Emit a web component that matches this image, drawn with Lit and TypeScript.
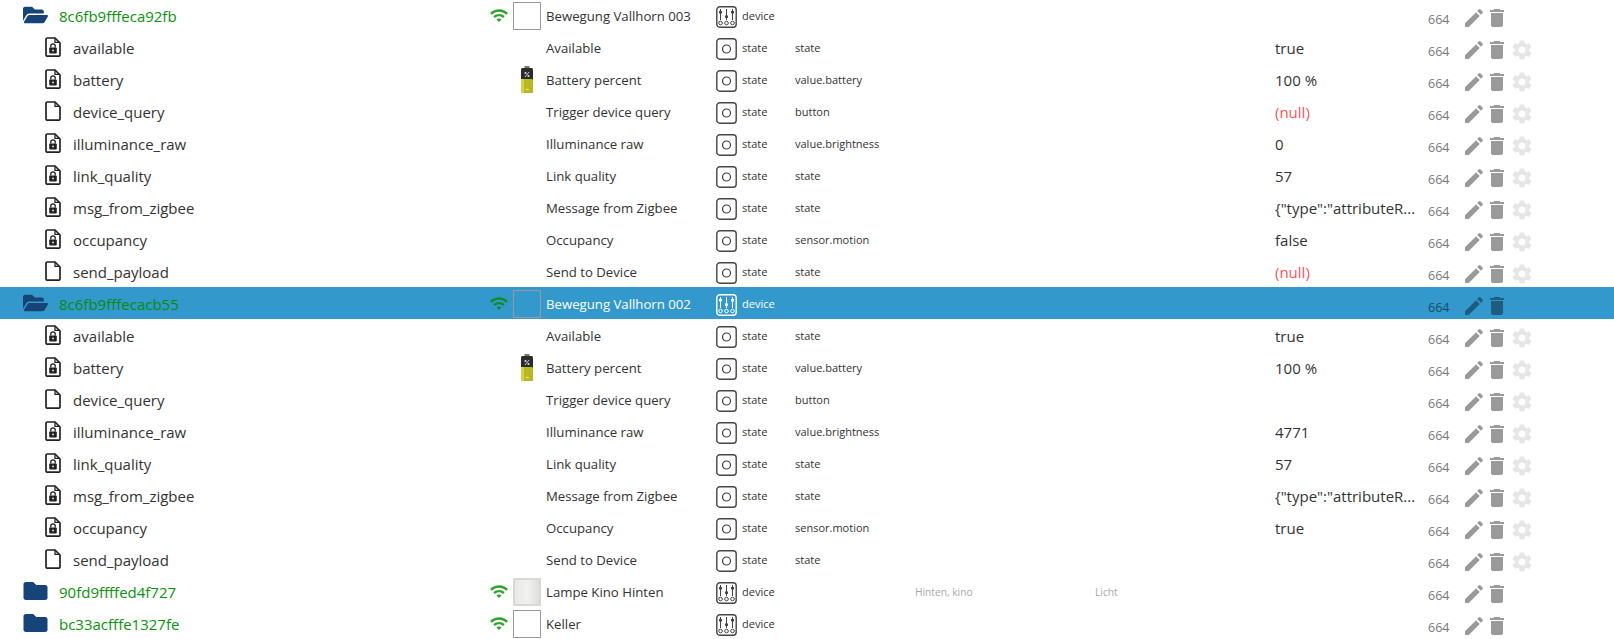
import { LitElement, html, css, svg } from "lit";
import { customElement } from "lit/decorators.js";

const folderOpen = svg`<svg class="folder" viewBox="0 0 576 512"><path fill="currentColor" d="M572.694 292.093L500.27 416.248A63.997 63.997 0 0 1 444.989 448H45.025c-18.523 0-30.064-20.093-20.731-36.093l72.424-124.155A64 64 0 0 1 152 256h399.964c18.523 0 30.064 20.093 20.73 36.093zM152 224h328v-48c0-26.51-21.49-48-48-48H272l-64-64H48C21.49 64 0 85.49 0 112v278.046l69.077-118.418C86.214 242.25 117.989 224 152 224z"/></svg>`;
const folderClosed = svg`<svg class="folder" viewBox="0 0 512 512"><path fill="currentColor" d="M464 128H272l-64-64H48C21.49 64 0 85.49 0 112v288c0 26.51 21.49 48 48 48h416c26.51 0 48-21.49 48-48V176c0-26.51-21.49-48-48-48z"/></svg>`;
const fileIcon = (lock: boolean) => svg`<svg class="file" viewBox="0 0 16 20">
  <path d="M2.5 1H10l5 5v12a1.2 1.2 0 0 1-1.2 1.2H2.2A1.2 1.2 0 0 1 1 18V2.2A1.2 1.2 0 0 1 2.2 1Z" fill="none" stroke="#222" stroke-width="1.7" stroke-linejoin="round"/>
  <path d="M10 1v4.4h5" fill="none" stroke="#222" stroke-width="1.3"/>
  ${lock ? svg`<rect x="4.2" y="10.4" width="7.6" height="6" rx=".8" fill="#222"/><path d="M5.8 10.6V9a2.2 2.2 0 0 1 4.4 0v1.6" fill="none" stroke="#222" stroke-width="1.3"/><circle cx="8" cy="13.4" r=".9" fill="#fff"/>` : ""}
</svg>`;
const wifi = svg`<svg class="wifi" viewBox="1 4 22 16"><path fill="currentColor" d="M1 9l2 2c4.97-4.97 13.03-4.97 18 0l2-2C16.93 2.93 7.08 2.93 1 9zm8 8l3 3 3-3c-1.65-1.66-4.34-1.66-6 0zm-4-4l2 2c2.76-2.76 7.24-2.76 10 0l2-2C15.14 9.14 8.87 9.14 5 13z"/></svg>`;
const battery = svg`<svg class="battery" viewBox="0 0 14 28">
  <rect x="4.5" y="0" width="5" height="3" fill="#777"/>
  <rect x="1" y="2" width="12" height="25" rx="1.5" fill="#2b2b2b"/>
  <rect x="1" y="13" width="12" height="14" rx="1" fill="#b9b81e"/>
  <rect x="1" y="13" width="3" height="14" fill="#d3d24a"/>
  <circle cx="5.5" cy="7" r="1.1" fill="#ddd"/><circle cx="8.5" cy="10" r="1.1" fill="#ddd"/><path d="M9 6 5 11" stroke="#ddd" stroke-width=".9"/>
  <rect x="5.5" y="23" width="3" height="1" fill="#e8e88a"/>
</svg>`;
const stateIcon = svg`<svg class="type" viewBox="0 0 21 22"><rect x=".8" y=".8" width="19.4" height="20.4" rx="3" fill="none" stroke="currentColor" stroke-width="1.4"/><circle cx="10.5" cy="11" r="4" fill="none" stroke="currentColor" stroke-width="1.2"/></svg>`;
const deviceIcon = svg`<svg class="type" viewBox="0 0 21 22"><rect x=".8" y=".8" width="19.4" height="20.4" rx="3" fill="none" stroke="currentColor" stroke-width="1.4"/>
  <g stroke="currentColor" stroke-width="1" fill="none"><path d="M4.5 3v11M10.5 3v11M16.5 3v11"/><circle cx="4.5" cy="17" r="1.8"/><circle cx="10.5" cy="17" r="1.8"/><circle cx="16.5" cy="17" r="1.8"/></g>
  <g fill="currentColor"><rect x="3" y="5" width="3" height="2.4"/><rect x="9" y="9.5" width="3" height="2.4"/><rect x="15" y="5" width="3" height="2.4"/></g></svg>`;
const pencil = svg`<svg class="act" viewBox="0 0 24 24"><path fill="currentColor" d="M3 17.25V21h3.75L17.81 9.94l-3.75-3.75L3 17.25zM20.71 7.04c.39-.39.39-1.02 0-1.41l-2.34-2.34c-.39-.39-1.02-.39-1.41 0l-1.83 1.83 3.75 3.75 1.83-1.83z"/></svg>`;
const trash = svg`<svg class="act" viewBox="0 0 24 24"><path fill="currentColor" d="M6 19c0 1.1.9 2 2 2h8c1.1 0 2-.9 2-2V7H6v12zM19 4h-3.5l-1-1h-5l-1 1H5v2h14V4z"/></svg>`;
const gear = svg`<svg class="act" viewBox="0 0 24 24"><path fill="currentColor" d="M19.14 12.94c.04-.3.06-.61.06-.94 0-.32-.02-.64-.07-.94l2.03-1.58c.18-.14.23-.41.12-.61l-1.92-3.32c-.12-.22-.37-.29-.59-.22l-2.39.96c-.5-.38-1.03-.7-1.62-.94l-.36-2.54c-.04-.24-.24-.41-.48-.41h-3.84c-.24 0-.43.17-.47.41l-.36 2.54c-.59.24-1.13.57-1.62.94l-2.39-.96c-.22-.08-.47 0-.59.22L2.74 8.87c-.12.21-.08.47.12.61l2.03 1.58c-.05.3-.09.63-.09.94s.02.64.07.94l-2.03 1.58c-.18.14-.23.41-.12.61l1.92 3.32c.12.22.37.29.59.22l2.39-.96c.5.38 1.03.7 1.62.94l.36 2.54c.05.24.24.41.48.41h3.84c.24 0 .44-.17.47-.41l.36-2.54c.59-.24 1.13-.56 1.62-.94l2.39.96c.22.08.47 0 .59-.22l1.92-3.32c.12-.22.07-.47-.12-.61l-2.01-1.58zM12 15.6c-1.98 0-3.6-1.62-3.6-3.6s1.62-3.6 3.6-3.6 3.6 1.62 3.6 3.6-1.62 3.6-3.6 3.6z"/></svg>`;

interface Child { id: string; lock: boolean; batt?: boolean; name: string; role: string; value: string; nullv?: boolean; }
interface Dev { id: string; open: boolean; sel?: boolean; name: string; box: "plain" | "lamp"; room?: string; func?: string; kids?: Child[]; }

const kids = (illum: string, occ: string, nulls: boolean): Child[] => [
  { id: "available", lock: true, name: "Available", role: "state", value: "true" },
  { id: "battery", lock: true, batt: true, name: "Battery percent", role: "value.battery", value: "100 %" },
  { id: "device_query", lock: false, name: "Trigger device query", role: "button", value: nulls ? "(null)" : "", nullv: nulls },
  { id: "illuminance_raw", lock: true, name: "Illuminance raw", role: "value.brightness", value: illum },
  { id: "link_quality", lock: true, name: "Link quality", role: "state", value: "57" },
  { id: "msg_from_zigbee", lock: true, name: "Message from Zigbee", role: "state", value: '{"type":"attributeR...' },
  { id: "occupancy", lock: true, name: "Occupancy", role: "sensor.motion", value: occ },
  { id: "send_payload", lock: false, name: "Send to Device", role: "state", value: nulls ? "(null)" : "", nullv: nulls },
];

const DEVS: Dev[] = [
  { id: "8c6fb9fffeca92fb", open: true, name: "Bewegung Vallhorn 003", box: "plain", kids: kids("0", "false", true) },
  { id: "8c6fb9fffecacb55", open: true, sel: true, name: "Bewegung Vallhorn 002", box: "plain", kids: kids("4771", "true", false) },
  { id: "90fd9ffffed4f727", open: false, name: "Lampe Kino Hinten", box: "lamp", room: "Hinten, kino", func: "Licht" },
  { id: "bc33acfffe1327fe", open: false, name: "Keller", box: "plain" },
];

@customElement("app-root")
export class AppRoot extends LitElement {
  static styles = css`
    :host { display: block; width: 1614px; height: 639px; overflow: hidden; background: #fff;
      font-family: "Open Sans", "Noto Sans", sans-serif; color: #222; }
    .list { margin-top: -1px; }
    .row { display: grid; height: 32px; align-items: center;
      grid-template-columns: 487px 24px 35px 170px 26px 53px 120px 180px 180px 153px 34px 23px 25px 24px 1fr; }
    .row.sel { background: #3399cc; }
    .tree { display: flex; align-items: center; min-width: 0; white-space: nowrap; }
    .tree span { padding-top: 2px; }
    .tree.dev { padding-left: 23px; gap: 11px; color: #0a930a; font-size: 15px; }
    .tree.kid { padding-left: 45px; gap: 12px; font-size: 15px; color: #333; }
    .folder { width: 25px; height: 24px; color: #164477; flex: none; }
    .file { width: 16px; height: 20px; flex: none; }
    .sel .tree.dev { color: #0a8a0a; }
    .wifi { width: 18px; height: 13px; color: #2aa52a; display: block; }
    .sel .wifi { color: #128a28; }
    .wificell, .boxcell, .typeicon { display: flex; align-items: center; }
    .wificell { justify-content: center; }
    .boxcell { justify-content: center; padding-right: 3px; padding-top: 1px; }
    .typeicon { padding-top: 3px; }
    .box { width: 28px; height: 28px; box-sizing: border-box; border: 1px solid #999; background: #fff; }
    .sel .box { background: transparent; }
    .box.lamp { border: 2px solid #d8d8d6; background: linear-gradient(90deg, #e8e8e6, #f2f2f0 50%, #dededc); }
    .battery { width: 14px; height: 28px; display: block; }
    .name { font-size: 13.2px; color: #333; white-space: nowrap; padding-top: 2px; }
    .sel .name { color: #fff; }
    .type { width: 21px; height: 22px; color: #444; display: block; }
    .sel .type { color: #fff; }
    .typecell { font-size: 11px; color: #333; }
    .sel .typecell { color: #fff; }
    .role { font-size: 11px; color: #333; white-space: nowrap; }
    .meta { font-size: 10.2px; color: #a8a8a8; white-space: nowrap; padding-top: 2px; }
    .value { font-size: 15px; color: #333; white-space: nowrap; padding-top: 2px; }
    .value.null { color: #f4545c; }
    .ack { font-size: 12.5px; color: #777; padding-top: 8px; }
    .sel .ack { color: #164a66; }
    .actcell { padding-top: 6px; color: #9a9a9a; }
    .sel .actcell { color: #1f5d80; }
    .actcell.g { color: #e6e6e6; }
    .act { width: 24px; height: 24px; display: block; }
  `;

  private renderDev(d: Dev) {
    return html`<div class="row ${d.sel ? "sel" : ""}">
      <div class="tree dev">${d.open ? folderOpen : folderClosed}<span>${d.id}</span></div>
      <div class="wificell">${wifi}</div>
      <div class="boxcell"><div class="box ${d.box === "lamp" ? "lamp" : ""}"></div></div>
      <div class="name">${d.name}</div>
      <div class="typeicon">${deviceIcon}</div>
      <div class="typecell">device</div>
      <div></div>
      <div class="meta">${d.room ?? ""}</div>
      <div class="meta">${d.func ?? ""}</div>
      <div></div>
      <div class="ack">664</div>
      <div class="actcell">${pencil}</div>
      <div class="actcell">${trash}</div>
      <div></div>
    </div>`;
  }

  private renderKid(k: Child) {
    return html`<div class="row">
      <div class="tree kid">${fileIcon(k.lock)}<span>${k.id}</span></div>
      <div></div>
      <div class="boxcell">${k.batt ? battery : ""}</div>
      <div class="name">${k.name}</div>
      <div class="typeicon">${stateIcon}</div>
      <div class="typecell">state</div>
      <div class="role">${k.role}</div>
      <div></div>
      <div></div>
      <div class="value ${k.nullv ? "null" : ""}">${k.value}</div>
      <div class="ack">664</div>
      <div class="actcell">${pencil}</div>
      <div class="actcell">${trash}</div>
      <div class="actcell g">${gear}</div>
    </div>`;
  }

  render() {
    return html`<div class="list">
      ${DEVS.map((d) => html`${this.renderDev(d)}${(d.kids ?? []).map((k) => this.renderKid(k))}`)}
    </div>`;
  }
}
